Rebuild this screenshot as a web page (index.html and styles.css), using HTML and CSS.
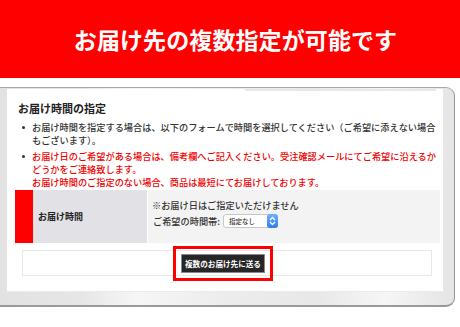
FILE: index.html
```html
<!DOCTYPE html>
<html>
<head>
    <title>お届け先の複数指定</title>
    <meta charset="UTF-8">
    <link rel="stylesheet" href="styles.css">
</head>
<body>
    <div id="banner">お届け先の複数指定が可能です</div>
    <div id="frame">
        <div id="panel">
            <div class="topbar"></div>
            <h3 class="heading">お届け時間の指定</h3>
            <ul class="notes">
                <li>お届け時間を指定する場合は、以下のフォームで時間を選択してください（ご希望に添えない場合もございます）。</li>
                <li class="alert">お届け日のご希望がある場合は、備考欄へご記入ください。受注確認メールにてご希望に沿えるかどうかをご連絡致します。<br/>お届け時間のご指定のない場合、商品は最短にてお届けしております。</li>
            </ul>
            <div class="timerow">
                <div class="mark"></div>
                <div class="label">お届け時間</div>
                <div class="field">
                    <div>※お届け日はご指定いただけません</div>
                    <div class="pick">ご希望の時間帯:
                        <span class="select">指定なし<span class="stepper"><svg width="7" height="10" viewBox="0 0 7 10"><path d="M1 4 L3.5 1.5 L6 4 M1 6 L3.5 8.5 L6 6" fill="none" stroke="#fff" stroke-width="1.3"/></svg></span></span>
                    </div>
                </div>
            </div>
            <div class="sendbox">
                <span class="send">複数のお届け先に送る</span>
            </div>
        </div>
    </div>
</body>
</html>
```

FILE: styles.css
```css
html, body {
    margin: 0;
    padding: 0;
    background-color: #ffffff;
    font-family: "Noto Sans CJK JP", "Liberation Sans", sans-serif;
    color: #333333;
}
#banner {
    height: 78px;
    background-color: #ff0000;
    color: #ffffff;
    font-size: 23px;
    font-weight: bold;
    line-height: 1;
    display: flex;
    align-items: center;
    justify-content: center;
    padding-left: 11px;
    letter-spacing: 0.1px;
}
#frame {
    margin-top: 9px;
    margin-right: 5px;
    padding: 0 11px 14px 7px;
    background: linear-gradient(90deg, #e2e2e2 0%, #e6e6e6 18%, #f6f6f6 30%, #ececec 50%, #e8e8e8 70%, #f6f6f6 85%, #e4e4e4 100%);
    border-top: 1px solid #a8a8a8;
    border-right: 1px solid #999999;
    border-bottom: 2px solid #9a9a9a;
    border-radius: 0 9px 9px 0;
}
#panel {
    background-color: #ffffff;
    height: 202px;
    box-shadow: 0 1px 0 #ebebeb;
}
.topbar {
    margin: 1px 0 0 238px;
    width: 191px;
    height: 2px;
    background-color: #e8e8e8;
}
.heading {
    margin: 10px 0 0 11px;
    font-size: 11px;
    line-height: 14px;
    font-weight: bold;
    color: #222222;
}
.notes {
    list-style: none;
    margin: 6px 0 0 0;
    padding: 0 0 0 25px;
    width: 410px;
    font-size: 9.2px;
    font-weight: 500;
    line-height: 13px;
}
.notes li {
    position: relative;
    margin-bottom: 3px;
}
.notes li:before {
    content: "";
    position: absolute;
    left: -10px;
    top: 5px;
    width: 3px;
    height: 3px;
    border-radius: 50%;
    background-color: #333333;
}
.notes li.alert {
    color: #f00000;
    margin-bottom: 0;
}
.timerow {
    display: flex;
    margin: 1px 0 0 8px;
    width: 425px;
    height: 53px;
}
.mark {
    width: 18px;
    background-color: #ff0000;
}
.label {
    width: 114px;
    background-color: #e1e1e6;
    font-size: 9px;
    font-weight: bold;
    color: #222222;
    display: flex;
    align-items: center;
    padding-left: 5px;
    box-sizing: border-box;
}
.field {
    flex: 1;
    margin-left: 1px;
    background-color: #f3f3f3;
    font-size: 9.2px;
    font-weight: 500;
    line-height: 13px;
    padding: 9px 0 0 4px;
}
.pick {
    margin-top: 2px;
    display: flex;
    align-items: center;
    padding-left: 1px;
}
.select {
    display: inline-flex;
    align-items: center;
    justify-content: space-between;
    margin-left: 3px;
    width: 55px;
    height: 14px;
    box-sizing: border-box;
    border: 1px solid #c8c8c8;
    border-radius: 3px;
    background-color: #ffffff;
    font-size: 6.5px;
    padding-left: 5px;
    color: #333333;
}
.stepper {
    width: 11px;
    height: 14px;
    margin-right: -1px;
    border-radius: 3px;
    background: linear-gradient(#6fb0ff, #2a7cf0);
    display: flex;
    align-items: center;
    justify-content: center;
}
.sendbox {
    margin: 7px 0 0 15px;
    width: 410px;
    height: 26px;
    box-sizing: border-box;
    border: 1px solid #e8e8e8;
    display: flex;
    justify-content: center;
    padding: 3px 8px 0 0;
}
.send {
    display: inline-block;
    width: 84px;
    height: 19px;
    box-sizing: border-box;
    background-color: #262626;
    border: 1px solid #8a8a8a;
    color: #ffffff;
    font-size: 7.6px;
    font-weight: bold;
    line-height: 17px;
    text-align: center;
    outline: 3px solid #ff0000;
    outline-offset: 5px;
}
```
